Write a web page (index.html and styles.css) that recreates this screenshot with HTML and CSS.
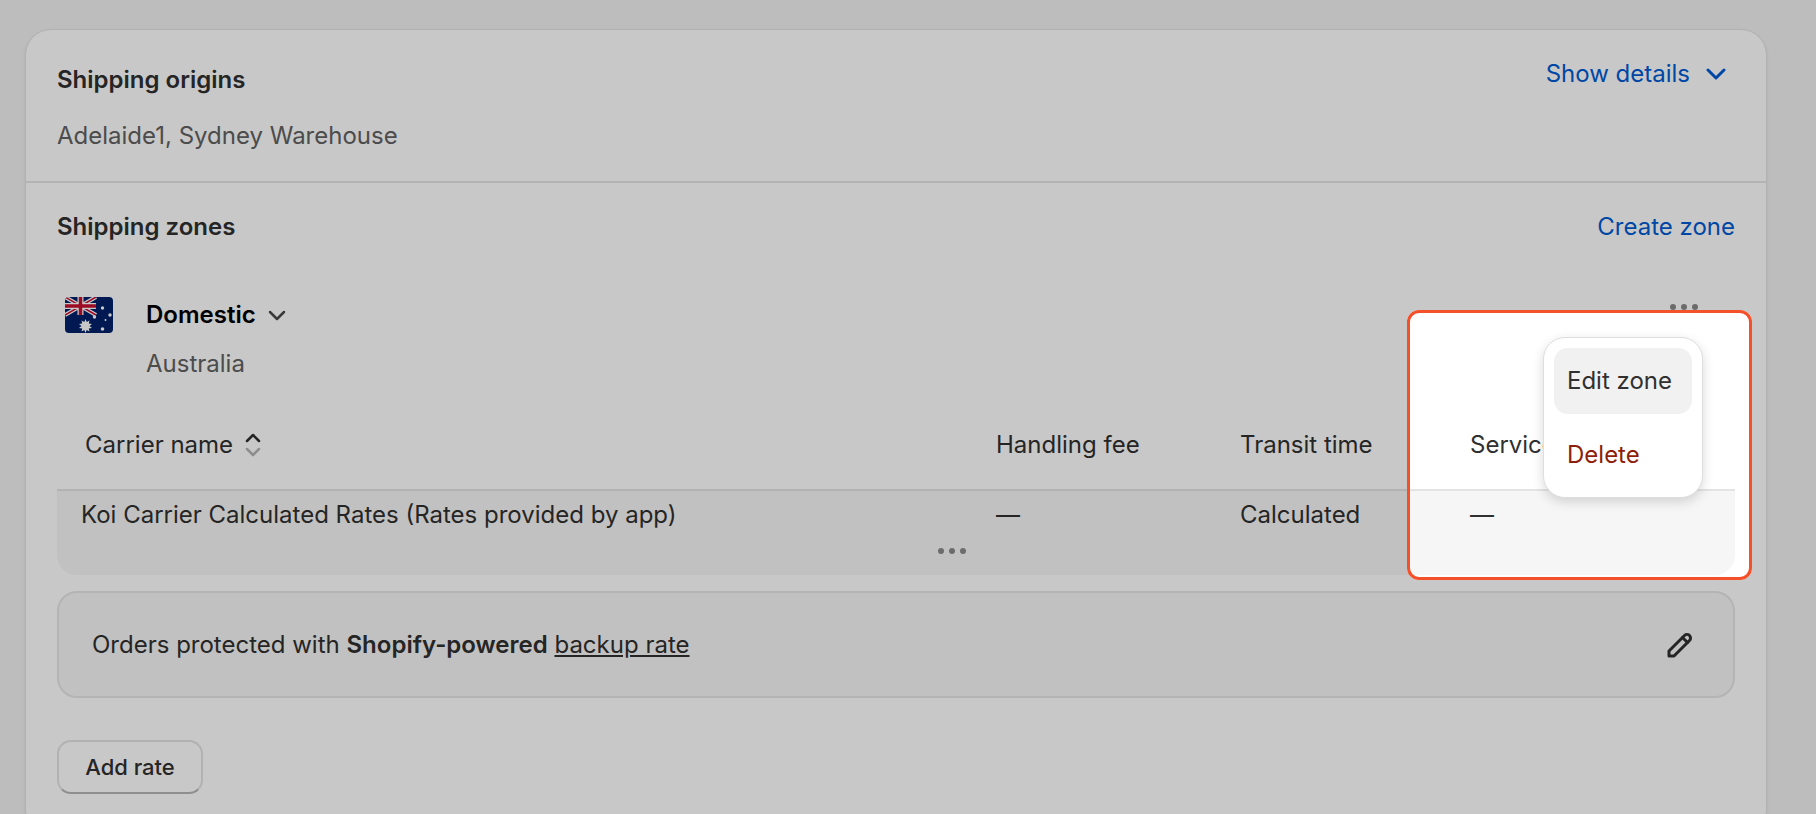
FILE: index.html
```html
<!DOCTYPE html>
<html>
<head>
  <meta charset="utf-8">
  <link rel="stylesheet" href="styles.css">
</head>
<body>
  <div class="card">
    <div class="origins">
      <div>
        <h2 class="section-title">Shipping origins</h2>
        <div class="origins-list">Adelaide1, Sydney Warehouse</div>
      </div>
      <a class="link show-details">
        Show details
        <svg class="link-chevron" viewBox="0 0 20 12" fill="none" stroke="currentColor" stroke-width="3" stroke-linecap="round" stroke-linejoin="round"><path d="M2 2l8 8 8-8"/></svg>
      </a>
    </div>

    <div class="zones">
      <div class="zones-head">
        <h2 class="section-title">Shipping zones</h2>
        <a class="link">Create zone</a>
      </div>

      <div class="zone">
        <svg class="flag" viewBox="0 0 48 36">
          <rect width="48" height="36" fill="#012169"/>
          <path d="M0 0l31 18M31 0L0 18" stroke="#fff" stroke-width="4"/>
          <path d="M0 0l31 18M31 0L0 18" stroke="#c8102e" stroke-width="1.5"/>
          <path d="M15.500 0v18M0 9h31" stroke="#fff" stroke-width="6"/>
          <path d="M15.500 0v18M0 9h31" stroke="#c8102e" stroke-width="3.500"/>
          <g fill="#fff">
            <path d="M20.500 22l1.200 3 2.800-1.600-.7 3.100 3.200.4-2.500 2.100 2.500 2-3.200.5.700 3.100-2.800-1.700-1.200 3-1.200-3-2.800 1.700.7-3.100-3.200-.5 2.500-2-2.500-2.100 3.200-.4-.7-3.100 2.800 1.600z"/>
            <circle cx="37.500" cy="11" r="1.700"/>
            <circle cx="45" cy="18" r="1.700"/>
            <circle cx="29.500" cy="20" r="1.700"/>
            <circle cx="40.500" cy="23" r="1"/>
            <circle cx="37.500" cy="32" r="1.800"/>
          </g>
        </svg>
        <div class="zone-name">
          <div class="zone-title">
            Domestic
            <svg class="zone-chevron" viewBox="0 0 18 11" fill="none" stroke="currentColor" stroke-width="2.500" stroke-linecap="round" stroke-linejoin="round"><path d="M2 2l7 7 7-7"/></svg>
          </div>
          <div class="zone-country">Australia</div>
        </div>
        <svg class="dots zone-dots" viewBox="0 0 28 6"><circle cx="3" cy="3" r="3"/><circle cx="14" cy="3" r="3"/><circle cx="25" cy="3" r="3"/></svg>
      </div>

      <div class="rate-table">
        <div class="rate-row rate-header">
          <div class="carrier-head">
            Carrier name
            <svg class="sort" viewBox="0 0 16 24" fill="none" stroke-width="2.500" stroke-linecap="round" stroke-linejoin="round"><path d="M2 8l6-6 6 6" stroke="#303030"/><path d="M2 16l6 6 6-6" stroke="#b5b5b5"/></svg>
          </div>
          <div>Handling fee</div>
          <div>Transit time</div>
          <div>Services</div>
        </div>
        <div class="rate-row rate-body">
          <div class="carrier-name">Koi Carrier Calculated Rates (Rates provided by app)</div>
          <div>—</div>
          <div>Calculated</div>
          <div>—</div>
          <svg class="dots row-dots" viewBox="0 0 28 6"><circle cx="3" cy="3" r="3"/><circle cx="14" cy="3" r="3"/><circle cx="25" cy="3" r="3"/></svg>
        </div>
      </div>

      <div class="backup">
        <div>Orders protected with <b>Shopify-powered</b> <u>backup rate</u></div>
        <svg class="pencil" viewBox="0 0 26 26" fill="none" stroke="#303030" stroke-width="3" stroke-linejoin="round" stroke-linecap="round"><path d="M2 24v-5L17.500 3.500a3.500 3.500 0 0 1 5 5L7 24z"/><path d="M15.500 5.500l5 5"/></svg>
      </div>

      <button class="add-rate">Add rate</button>
    </div>
  </div>

  <div class="popover">
    <div class="popover-item popover-active">Edit zone</div>
    <div class="popover-item popover-danger">Delete</div>
  </div>

  <div class="spotlight"></div>
</body>
</html>
```

FILE: styles.css
```css
* {
  margin: 0;
  padding: 0;
  box-sizing: border-box;
}

body {
  position: relative;
  height: 814px;
  overflow: hidden;
  padding: 29px 49px 0 25px;
  background: #f1f1f1;
  font-family: Inter, "Liberation Sans", sans-serif;
  font-size: 24px;
  line-height: 30px;
  color: #303030;
}

.card {
  background: #fff;
  border: 1px solid #e3e3e3;
  border-radius: 26px;
  box-shadow: 0 1px 3px rgba(0, 0, 0, 0.08);
}

.origins {
  display: flex;
  justify-content: space-between;
  padding: 35px 40px 30px 31px;
  border-bottom: 2px solid #e6e6e6;
}

.section-title {
  font-size: 24px;
  font-weight: 600;
}

.origins-list {
  margin-top: 26px;
  color: #616161;
}

.link {
  color: #005bd3;
}

.show-details {
  display: flex;
  align-items: center;
  gap: 16px;
  height: 30px;
  margin-top: -6px;
}

.link-chevron {
  width: 20px;
  height: 12px;
}

.zones {
  padding: 29px 31px 40px;
}

.zones-head {
  display: flex;
  justify-content: space-between;
}

.zone {
  display: flex;
  margin-top: 55px;
  padding-left: 8px;
}

.flag {
  width: 48px;
  height: 36px;
  border-radius: 4px;
}

.zone-name {
  margin: 3px 0 0 33px;
}

.zone-title {
  display: flex;
  align-items: center;
  gap: 12px;
  font-weight: 600;
  color: #000;
}

.zone-chevron {
  width: 18px;
  height: 11px;
  color: #4a4a4a;
}

.zone-country {
  margin-top: 19px;
  color: #616161;
}

.dots {
  width: 28px;
  height: 6px;
  fill: #8a8a8a;
}

.zone-dots {
  margin: 7px 37px 0 auto;
}

.rate-table {
  margin-top: 22px;
}

.rate-row {
  display: grid;
  grid-template-columns: 939px 244px 230px 1fr;
  align-items: center;
}

.rate-header {
  height: 90px;
  border-bottom: 2px solid #e3e3e3;
}

.carrier-head {
  display: flex;
  align-items: center;
  gap: 12px;
  padding-left: 28px;
}

.sort {
  width: 16px;
  height: 24px;
}

.rate-body {
  height: 84px;
  padding-bottom: 12px;
  background: #f6f6f6;
  border-radius: 0 0 20px 20px;
}

.carrier-name {
  padding-left: 24px;
}

.row-dots {
  justify-self: end;
  margin-right: 30px;
}

.backup {
  display: flex;
  align-items: center;
  justify-content: space-between;
  height: 107px;
  margin-top: 16px;
  padding: 0 40px 0 33px;
  background: #f6f6f6;
  border: 2px solid #e6e6e6;
  border-radius: 20px;
}

.backup b {
  font-weight: 600;
}

.pencil {
  width: 26px;
  height: 26px;
}

.add-rate {
  display: block;
  width: 146px;
  height: 54px;
  margin-top: 42px;
  background: #fff;
  border: 2px solid #e3e3e3;
  border-bottom-color: #b5b5b5;
  border-radius: 14px;
  font-family: inherit;
  font-size: 22px;
  font-weight: 500;
  color: #303030;
}

.popover {
  position: absolute;
  top: 337px;
  left: 1543px;
  width: 160px;
  height: 161px;
  padding: 10px;
  background: #fff;
  border: 1px solid #dedede;
  border-radius: 22px;
  box-shadow: 0 4px 12px rgba(0, 0, 0, 0.15);
}

.popover-item {
  height: 66px;
  padding: 18px 0 0 13px;
  border-radius: 14px;
}

.popover-active {
  background: #f1f1f1;
}

.popover-danger {
  margin-top: 8px;
  color: #8e1f0b;
}

/* dims everything around the highlighted area */
.spotlight {
  position: absolute;
  top: 310px;
  left: 1407px;
  width: 345px;
  height: 270px;
  border: 3px solid #f4502a;
  border-radius: 12px;
  box-shadow: 0 0 0 3000px rgba(0, 0, 0, 0.215);
}
```
